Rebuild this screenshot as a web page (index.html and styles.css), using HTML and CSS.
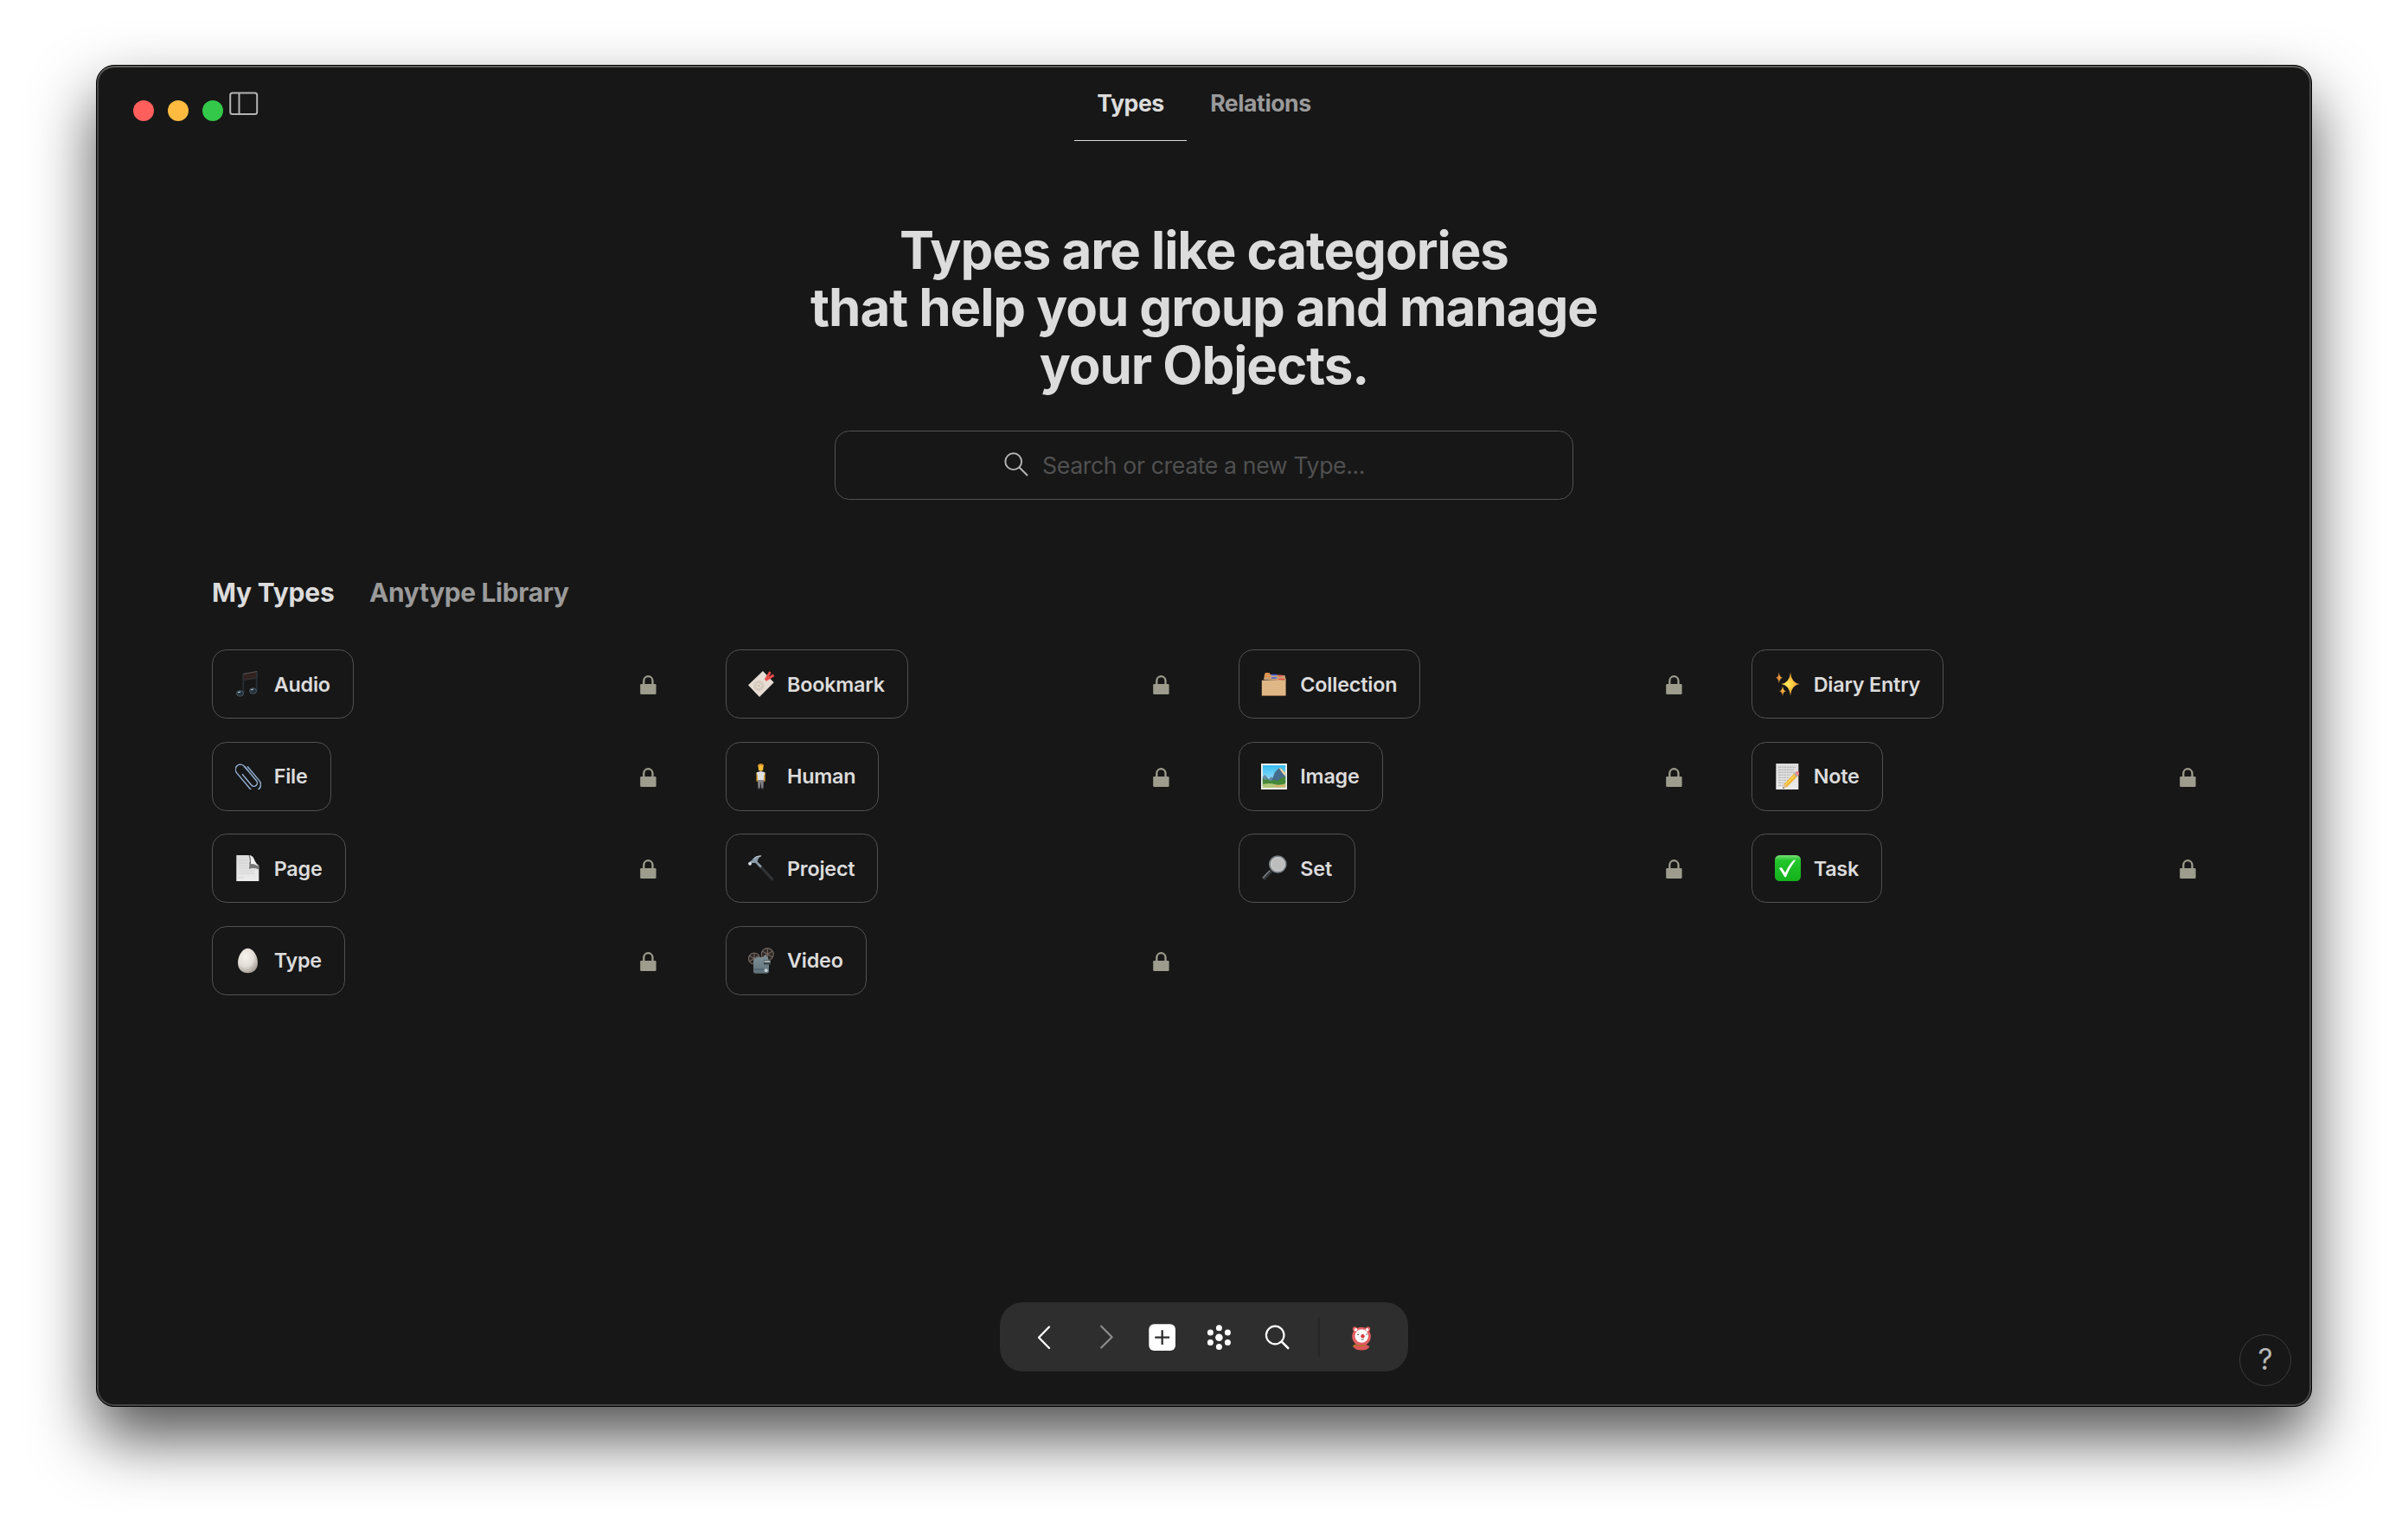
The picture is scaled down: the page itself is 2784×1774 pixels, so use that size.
FILE: index.html
```html
<!DOCTYPE html>
<html lang="en">
<head>
<meta charset="utf-8">
<title>Types</title>
<link rel="stylesheet" href="styles.css">
</head>
<body>
<svg class="defs" width="0" height="0">
  <defs>
    <linearGradient id="paper" x1="0" y1="0" x2="0" y2="1"><stop offset="0" stop-color="#dcdcdc"/><stop offset="1" stop-color="#ececec"/></linearGradient>
    <radialGradient id="shell" cx=".38" cy=".32" r=".75"><stop offset="0" stop-color="#f7f4ee"/><stop offset=".55" stop-color="#e2ddd6"/><stop offset="1" stop-color="#9d968e"/></radialGradient>
    <linearGradient id="sky" x1="0" y1="0" x2="0" y2="1"><stop offset="0" stop-color="#35bdf2"/><stop offset="1" stop-color="#c4ecf8"/></linearGradient>
    <linearGradient id="green" x1="0" y1="0" x2="0" y2="1"><stop offset="0" stop-color="#7be07c"/><stop offset=".2" stop-color="#22c62b"/><stop offset="1" stop-color="#15b11c"/></linearGradient>
    <radialGradient id="gold"><stop offset="0" stop-color="#ffe95e"/><stop offset=".45" stop-color="#fcc93f"/><stop offset="1" stop-color="#d9853a"/></radialGradient>
    <linearGradient id="steel" x1="0" y1="0" x2="0" y2="1"><stop offset="0" stop-color="#80929b"/><stop offset="1" stop-color="#5e7078"/></linearGradient>
    <symbol id="lock" viewBox="0 0 19 22"><rect x=".2" y="10" width="18.4" height="12" rx="1.2" fill="#9d9c8d"/><path d="M4.3 10.500V6.300a5.100 5.100 0 0 1 10.200 0v4.200" fill="none" stroke="#9d9c8d" stroke-width="2.300"/></symbol>
  </defs>
</svg>

<main class="window">
  <header class="header">
    <div class="controls">
      <span class="light red"></span><span class="light yellow"></span><span class="light green"></span>
      <svg class="sidebar" viewBox="0 0 34 28"><rect x="1.200" y="1.500" width="31" height="24.500" rx="2.500"/><path d="M11.500 1.500v24.500"/></svg>
    </div>
    <nav class="tabs"><span class="tab active">Types</span><span class="tab">Relations</span></nav>
  </header>

  <h1 class="title">Types are like categories<br>that help you group and manage<br>your Objects.</h1>

  <div class="search">
    <svg class="search-icon" viewBox="0 0 28 28"><circle cx="10.700" cy="10.700" r="9.400"/><path d="M17.500 17.500l9 9"/></svg>
    <span class="placeholder">Search or create a new Type...</span>
  </div>

  <nav class="sections"><span class="section active">My Types</span><span class="section">Anytype Library</span></nav>

  <section class="grid">
    <div class="item"><div class="card"><svg class="emoji" viewBox="0 0 30 30"><path d="M9 3.800L25.300.4V8L9 10.600z" fill="#33211f" stroke="#3d464b" stroke-width=".7"/><path d="M9 3.500L25 .5" stroke="#665a59" stroke-width=".8"/><path d="M9.300 4v22M24.700 1v22" stroke="#292e32" stroke-width="1.800"/><g fill="#23303a" stroke="#526471" stroke-width=".8"><ellipse cx="5.500" cy="26" rx="4" ry="3.300"/><ellipse cx="20.500" cy="23" rx="4" ry="3.300"/></g><path d="M3 24.800l3-.7M18 21.800l3-.7" stroke="#aab8c0" stroke-width="1.200"/></svg><span class="name">Audio</span></div><svg class="lock"><use href="#lock"/></svg></div>

    <div class="item"><div class="card"><svg class="emoji" viewBox="0 0 30 30"><path d="M17 0L29.700 13.200 13 30 0 16.300z" fill="#e7ddd4"/><circle cx="12.300" cy="17" r="4.500" fill="none" stroke="#cbbdae" stroke-width="3" stroke-dasharray="1 .7"/><circle cx="12.300" cy="17" r="1.500" fill="#cbbdae"/><path d="M20 10.500L25.500 1M21 10l8.500-5.200M20 10.500l5.500-3" stroke="#e84c4a" stroke-width="2.800"/></svg><span class="name">Bookmark</span></div><svg class="lock"><use href="#lock"/></svg></div>

    <div class="item"><div class="card"><svg class="emoji" viewBox="0 0 30 30"><path d="M3 10l1-6 1.500-2h4l1 2 17 1 1.500 6z" fill="#c79f72"/><path d="M4.500 3h5M4 6h6" stroke="#f28b35" stroke-width="1.500"/><path d="M12 4.500h6M12 8h6" stroke="#405be8" stroke-width="1.500"/><path d="M19.500 5.500h6M20 9.500h7" stroke="#e8524d" stroke-width="1.700"/><path d="M.8 10.800L20 10.200l8.600.7v17H.8z" fill="#dfb686"/><path d="M.8 28.500h27.800" stroke="#94714c"/></svg><span class="name">Collection</span></div><svg class="lock"><use href="#lock"/></svg></div>

    <div class="item"><div class="card"><svg class="emoji" viewBox="0 0 30 30" fill="url(#gold)"><path d="M18 1.500Q19 13.500 28.500 15 19 16.500 18 28.500 17 16.500 7.500 15 17 13.500 18 1.500zM4.800 1.200Q5.300 7 9 7.800 5.300 8.600 4.800 14.200 4.300 8.600 1 7.800 4.300 7 4.800 1.200zM9 17.200Q9.500 22.600 13 23.300 9.500 24 9 29 8.500 24 5 23.300 8.500 22.600 9 17.200z"/></svg><span class="name">Diary Entry</span></div></div>

    <div class="item"><div class="card"><svg class="emoji" viewBox="0 0 30 30"><g fill="none" stroke="#91aed0" stroke-width="1.500" stroke-linecap="round" transform="rotate(-40 15 15)"><path d="M11.500 9v16a3.800 3.800 0 0 0 7.600 0V3.500"/><path d="M19.100 8V3a5.800 5.800 0 0 0-11.600 0v24a7 7 0 0 0 14.200 0V6"/></g></svg><span class="name">File</span></div><svg class="lock"><use href="#lock"/></svg></div>

    <div class="item"><div class="card"><svg class="emoji" viewBox="0 0 30 30"><path d="M11.500 2Q14.500-.8 17.700 2L17.200 7.500Q14.500 10 12 7.500z" fill="#f7bd37"/><path d="M11.400 4V1.600Q14.500-1 17.800 1.600V4l-1-1.500h-4z" fill="#d99627"/><path d="M10.300 11v9M18.900 11v9" stroke="#d99b28" stroke-width="1.700" stroke-linecap="round"/><path d="M9.500 10.500Q14.500 7.500 19.700 10.500L18.200 14v6h-7.200v-6z" fill="#dfe0e3"/><path d="M11 19h7l-.6 9.500h-2.200L14.500 21l-.9 7.500h-2.200z" fill="#818286"/><path d="M11 28.800h2.800M15.200 28.800H18" stroke="#47484b" stroke-width="1.600"/></svg><span class="name">Human</span></div><svg class="lock"><use href="#lock"/></svg></div>

    <div class="item"><div class="card"><svg class="emoji" viewBox="0 0 30 30"><path fill="#f4f4f0" d="M0 0h30v30H0z"/><path fill="url(#sky)" d="M1.800 2h26.400v26H1.800z"/><path d="M1.800 15l3-2 4 5 3-3 3.500 5H1.800z" fill="#668ca3"/><path d="M12 20l4-10 5-5 3 1 4.200 5v11z" fill="#456c8c"/><path d="M20.500 5l3 .7 4.700 5v4l-3-3z" fill="#e8d3a3"/><path d="M1.800 17l3 2 2-1 4 2 5-1 4 1 3-3 5.400-2v11H1.800z" fill="#458838"/><path d="M1.800 24q8-2 14 0t12.400-1v5H1.800z" fill="#b0c77c"/><path d="M13 26q8-2 15.200-1v2H16z" fill="#d8b26c"/></svg><span class="name">Image</span></div><svg class="lock"><use href="#lock"/></svg></div>

    <div class="item"><div class="card"><svg class="emoji" viewBox="0 0 30 30"><path d="M1.300 0h26v30h-26z" fill="url(#paper)"/><path d="M4 4.200h20M4 7.200h18M4 10.200h19M4 13.200h14M4 16.200h13M4 19.200h11M4 22.200h8M4 25.200h6" stroke="#a4a4a4" stroke-width=".9" stroke-dasharray="3 .7 2 .6"/><path d="M9.500 28.700l1.200-5L23 10.500l3.500 3.800L14.300 27z" fill="#f2b635"/><path d="M11.500 25.500L24.500 12" stroke="#ffd45c" stroke-width="1.400"/><path d="M21.800 11.700l1.400-1.400 3.500 4-1.400 1.400z" fill="#a9adb0"/><path d="M23.200 10.300l2-1.300q3.500 0 2.800 4l-1.300 1.300z" fill="#ed8088"/><path d="M9.500 28.700l1.200-5 3.600 3.300z" fill="#dfc094"/><path d="M9.200 29l.5-2 1.300 1.300z" fill="#333"/></svg><span class="name">Note</span></div><svg class="lock"><use href="#lock"/></svg></div>

    <div class="item"><div class="card"><svg class="emoji" viewBox="0 0 30 30"><path d="M1.300 0H17q4 1 5 5t5.300 8.500V30h-26z" fill="url(#paper)"/><path d="M4 6h10M4 9h11M4 12h11M4 15h12M4 18h18M4 21h18M4 26h6" stroke="#c6c6c6" stroke-width=".7"/><path d="M16.500 8l10.800 3v5.500Q21 14 16 16z" fill="#777"/><path d="M16 0q2 3 1.300 10 6-.5 10 3.500L20 3.500z" fill="#f2f2f2"/><path d="M16 0q2 3 1.300 10" stroke="#555" fill="none"/></svg><span class="name">Page</span></div><svg class="lock"><use href="#lock"/></svg></div>

    <div class="item"><div class="card"><svg class="emoji" viewBox="0 0 30 30"><path d="M8.500 7L17 16" stroke="#8e9aa9" stroke-width="2.600"/><path d="M16 15l11.700 12.800" stroke="#2a2c2e" stroke-width="3.600" stroke-linecap="round"/><path d="M17 15.500l11 12" stroke="#44474a" stroke-width=".7"/><path d="M.2 9.500L2 7.300 5.500 5Q8.500.2 16 .6 11.500 2.500 11 6.500L7.500 9 4.500 9 2.500 12z" fill="#8c9cac"/><path d="M5.500 5Q8.500.7 15 1" stroke="#c2d0dc" fill="none"/><circle cx="2" cy="9.800" r="1.900" fill="#d8dee4"/></svg><span class="name">Project</span></div></div>

    <div class="item"><div class="card"><svg class="emoji" viewBox="0 0 30 30"><path d="M11.500 18L2.500 27.500" stroke="#34383b" stroke-width="4.500"/><path d="M10 17.800L2 26.300" stroke="#8b9094" stroke-width="1.200"/><circle cx="19.300" cy="10.500" r="9.600" fill="#b3b3b3" stroke="#777f86" stroke-width="1.500"/><circle cx="19.600" cy="10.200" r="7.600" fill="#bdbdbd" stroke="#cfcfcf" stroke-width=".8"/></svg><span class="name">Set</span></div><svg class="lock"><use href="#lock"/></svg></div>

    <div class="item"><div class="card"><svg class="emoji" viewBox="0 0 30 30"><rect width="30" height="30" rx="5.500" fill="url(#green)"/><path d="M5 15.200Q7 13 8.800 15.500L12 20.200Q16 11.500 21.500 5.800 23.300 5 24 6 17 14.500 13.300 24.500 12 26.300 10.800 24.500 8 19 5 15.200z" fill="#fff"/></svg><span class="name">Task</span></div><svg class="lock"><use href="#lock"/></svg></div>

    <div class="item"><div class="card"><svg class="emoji" viewBox="0 0 30 30"><path d="M14.500.8C20.500.8 26 9 26 17.500 26 25 21 29.200 14.500 29.200S3 25 3 17.500C3 9 8.500.8 14.500.8z" fill="url(#shell)"/></svg><span class="name">Type</span></div><svg class="lock"><use href="#lock"/></svg></div>

    <div class="item"><div class="card"><svg class="emoji" viewBox="0 0 30 30"><g fill="#2a2725" stroke="#75675f" stroke-width="1.200"><circle cx="7" cy="12.500" r="6.500"/><circle cx="22.300" cy="7.600" r="7"/><path d="M7 6v13M1.300 9.300l11.400 6.400M1.300 15.700L12.700 9.300M22.300.6v14M16.200 4.100l12.200 7M16.200 11.100l12.200-7"/></g><path d="M6 27V16q0-4 5-5h7l2-3 3 4 1 3v12q0 2.700-3 2.700H8.500Q6 29.700 6 27z" fill="url(#steel)"/><path d="M18 14.500h8v5h-8z" fill="#3c464b"/><path d="M18.500 16h7" stroke="#c7d0d4" stroke-width="1.500"/><circle cx="20.700" cy="26.300" r="2" fill="#c3ced2"/><path d="M6.500 25h12" stroke="#475860"/></svg><span class="name">Video</span></div><svg class="lock"><use href="#lock"/></svg></div>
  </section>

  <div class="toolbar">
    <svg class="tools" viewBox="0 0 472 80" fill="none" stroke-linecap="round">
      <path d="M57 28.500L45 40.700 57 53" stroke="#fff" stroke-width="2.300" stroke-linejoin="round"/>
      <path d="M117.200 27.700L129.600 40.200 117.200 52.500" stroke="#8b8b8b" stroke-width="2.300" stroke-linejoin="round"/>
      <rect x="172.300" y="25.300" width="30.700" height="30.700" rx="6" fill="#fff"/>
      <path d="M179.300 40.700h16.800M187.700 32.300v16.800" stroke="#2e2e2e" stroke-width="2.300" stroke-linecap="butt"/>
      <g fill="#fff"><circle cx="253.400" cy="40.700" r="4.300"/><circle cx="253.400" cy="29.700" r="3.500"/><circle cx="253.400" cy="51.600" r="3.500"/><circle cx="243.400" cy="35" r="3.500"/><circle cx="243.400" cy="46.500" r="3.500"/><circle cx="263.400" cy="35" r="3.500"/><circle cx="263.400" cy="46.500" r="3.500"/></g>
      <circle cx="318.200" cy="38" r="10.300" stroke="#fff" stroke-width="2.200"/><path d="M325.800 45.600l7.400 7.400" stroke="#fff" stroke-width="2.600"/>
      <path d="M369 17v46" stroke="#252525" stroke-width="1.700" stroke-linecap="butt"/>
      <g><circle cx="410.500" cy="31" r="2.700" fill="#e05d5d"/><circle cx="425.500" cy="31" r="2.700" fill="#e05d5d"/><circle cx="418" cy="39.500" r="10.800" fill="#e25f60"/><path d="M408.500 51q9.500-6 19 0-2 4.500-9.500 4.500T408.500 51z" fill="#dc5557"/><circle cx="411.500" cy="31.700" r="1.800" fill="#fff"/><circle cx="424.700" cy="31.700" r="1.800" fill="#fff"/><circle cx="418.300" cy="39" r="7.800" fill="#fff"/><circle cx="419.500" cy="39.200" r="2.200" fill="#d9343d"/><path d="M413.500 37.500h1.300M423.500 37h1.300M418 42.900q1.200 1 2.500 0" stroke="#333" stroke-width=".8"/><path d="M408.500 51q3-3 5-1.500t8 .5" stroke="#ad7a27" stroke-width="1.500"/></g>
    </svg>
  </div>
  <div class="help">?</div>
</main>
</body>
</html>
```
FILE: styles.css
```css
* { box-sizing: border-box; }

body {
  margin: 0;
  padding: 75px 111px 0;
  height: 1774px;
  overflow: hidden;
  background: #fff;
  color: #dcdcdc;
  font-family: Inter, "Liberation Sans", sans-serif;
}

.defs { position: absolute; }

.window {
  position: relative;
  width: 2562px;
  height: 1552px;
  border: 1px solid #000;
  border-radius: 21px;
  background: #171717;
  box-shadow:
    inset 0 2px 0 #5d5f5b,
    inset 0 0 0 2px #464646,
    0 36px 72px rgba(0, 0, 0, .68);
}

.header {
  display: grid;
  grid-template-columns: 1fr auto 1fr;
  height: 87px;
}

.controls {
  display: flex;
  align-items: center;
  gap: 16px;
  padding-left: 42px;
}

.light {
  width: 24px;
  height: 24px;
  margin-top: 17px;
  border-radius: 50%;
}

.red { background: #ff5f5c; }
.yellow { background: #febb40; }
.green { background: #34c84a; }

.sidebar {
  width: 34px;
  height: 28px;
  margin-left: -9px;
  fill: none;
  stroke: #b4b4b4;
  stroke-width: 2;
}

.tabs { display: flex; }

.tab {
  padding: 0 26.67px;
  border-bottom: 1px solid transparent;
  color: #9a9a9a;
  font-size: 26.67px;
  font-weight: 700;
  letter-spacing: -.45px;
  line-height: 86px;
}

.tab.active {
  border-color: #dcdcdc;
  color: #dcdcdc;
}

.title {
  margin: 92.5px 0 0;
  font-size: 60px;
  font-weight: 700;
  letter-spacing: -1.07px;
  line-height: 66.67px;
  text-align: center;
}

.search {
  display: flex;
  align-items: center;
  width: 854px;
  height: 80px;
  margin: 42.5px auto 0;
  padding-left: 195px;
  border: 1px solid #525252;
  border-radius: 16.67px;
}

.search-icon {
  width: 28px;
  height: 28px;
  margin-top: -2px;
  fill: none;
  stroke: #b6b6b6;
  stroke-width: 1.9;
  stroke-linecap: round;
}

.placeholder {
  margin-left: 16px;
  color: #505050;
  font-size: 26.67px;
  letter-spacing: -.38px;
}

.sections {
  display: flex;
  gap: 40.5px;
  margin-top: 86.8px;
  padding-left: 133px;
  font-size: 30px;
  font-weight: 700;
  line-height: 40px;
}

.section {
  color: #9a9a9a;
  letter-spacing: -.4px;
}

.section.active {
  color: #dcdcdc;
  letter-spacing: -.22px;
}

.grid {
  display: grid;
  grid-template-columns: repeat(4, 1fr);
  gap: 26.67px 80px;
  margin: 46.2px 133.33px 0;
}

.item {
  display: flex;
  align-items: center;
  justify-content: space-between;
  height: 80px;
}

.card {
  display: flex;
  align-items: center;
  height: 80px;
  padding: 0 26px 0 25.33px;
  border: 1px solid #525252;
  border-radius: 16.67px;
}

.emoji {
  width: 30px;
  height: 30px;
}

.name {
  margin-left: 15px;
  font-size: 23.33px;
  font-weight: 600;
  letter-spacing: -.19px;
}

.lock {
  width: 19px;
  height: 22px;
  margin-top: 2px;
}

/* floating controls over the page */
.toolbar {
  position: absolute;
  left: 1044px;
  bottom: 40px;
  width: 472px;
  height: 80px;
  border-radius: 26.67px;
  background: #2e2e2e;
}

.tools {
  display: block;
  width: 472px;
  height: 80px;
}

.help {
  position: absolute;
  right: 23px;
  bottom: 23px;
  width: 60px;
  height: 60px;
  border: 1px solid #3c3c3c;
  border-radius: 50%;
  color: #b8b8b8;
  font-size: 33.33px;
  line-height: 57px;
  text-align: center;
}
```
